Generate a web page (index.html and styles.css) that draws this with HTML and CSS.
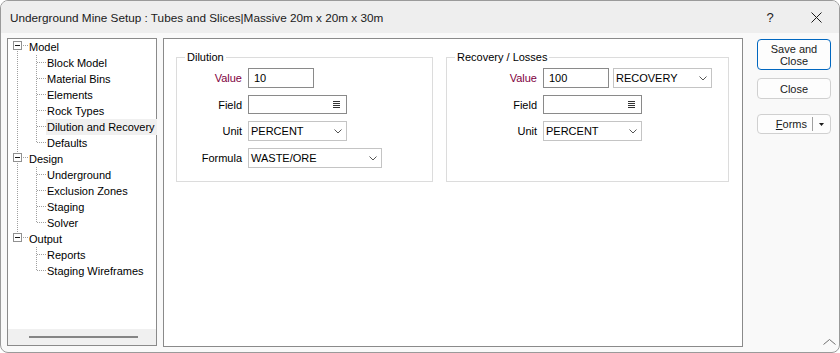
FILE: index.html
```html
<!DOCTYPE html>
<html lang="en">
<head>
  <meta charset="UTF-8" />
  <title>Underground Mine Setup</title>
  <link rel="stylesheet" href="styles.css">
</head>
<body>
  <div class="window">
    <div class="titlebar">
      <span class="title">Underground Mine Setup : Tubes and Slices|Massive 20m x 20m x 30m</span>
      <span class="tb-btn help">?</span>
      <span class="tb-btn">
        <svg width="11" height="11" viewBox="0 0 11 11"><path d="M0.5 0.5L10.5 10.5M10.5 0.5L0.5 10.5" stroke="#1b1b1b" stroke-width="1" fill="none"/></svg>
      </span>
    </div>

    <div class="content">
      <div class="tree-panel">
        <div class="tree">
          <div class="node">
            <svg class="twist" width="20" height="16"><path class="dot" d="M9.5 12V16M15 6.5H20"/><rect x="5.5" y="2.5" width="8" height="8"/><path class="minus" d="M7 6.5H12"/></svg>
            <span class="label">Model</span>
          </div>
          <div class="node">
            <svg width="38" height="16"><path class="dot" d="M9.5 0V16M28.5 0V16M29 7.5H38"/></svg>
            <span class="label">Block Model</span>
          </div>
          <div class="node">
            <svg width="38" height="16"><path class="dot" d="M9.5 0V16M28.5 0V16M29 7.5H38"/></svg>
            <span class="label">Material Bins</span>
          </div>
          <div class="node">
            <svg width="38" height="16"><path class="dot" d="M9.5 0V16M28.5 0V16M29 7.5H38"/></svg>
            <span class="label">Elements</span>
          </div>
          <div class="node">
            <svg width="38" height="16"><path class="dot" d="M9.5 0V16M28.5 0V16M29 7.5H38"/></svg>
            <span class="label">Rock Types</span>
          </div>
          <div class="node selected">
            <svg width="38" height="16"><path class="dot" d="M9.5 0V16M28.5 0V16M29 7.5H38"/></svg>
            <span class="label">Dilution and Recovery</span>
          </div>
          <div class="node">
            <svg width="38" height="16"><path class="dot" d="M9.5 0V16M28.5 0V8M29 7.5H38"/></svg>
            <span class="label">Defaults</span>
          </div>

          <div class="node">
            <svg class="twist" width="20" height="16"><path class="dot" d="M9.5 0V2M9.5 12V16M15 6.5H20"/><rect x="5.5" y="2.5" width="8" height="8"/><path class="minus" d="M7 6.5H12"/></svg>
            <span class="label">Design</span>
          </div>
          <div class="node">
            <svg width="38" height="16"><path class="dot" d="M9.5 0V16M28.5 0V16M29 7.5H38"/></svg>
            <span class="label">Underground</span>
          </div>
          <div class="node">
            <svg width="38" height="16"><path class="dot" d="M9.5 0V16M28.5 0V16M29 7.5H38"/></svg>
            <span class="label">Exclusion Zones</span>
          </div>
          <div class="node">
            <svg width="38" height="16"><path class="dot" d="M9.5 0V16M28.5 0V16M29 7.5H38"/></svg>
            <span class="label">Staging</span>
          </div>
          <div class="node">
            <svg width="38" height="16"><path class="dot" d="M9.5 0V16M28.5 0V8M29 7.5H38"/></svg>
            <span class="label">Solver</span>
          </div>

          <div class="node">
            <svg class="twist" width="20" height="16"><path class="dot" d="M9.5 0V2M15 6.5H20"/><rect x="5.5" y="2.5" width="8" height="8"/><path class="minus" d="M7 6.5H12"/></svg>
            <span class="label">Output</span>
          </div>
          <div class="node">
            <svg width="38" height="16"><path class="dot" d="M28.5 0V16M29 7.5H38"/></svg>
            <span class="label">Reports</span>
          </div>
          <div class="node">
            <svg width="38" height="16"><path class="dot" d="M28.5 0V8M29 7.5H38"/></svg>
            <span class="label">Staging Wireframes</span>
          </div>
        </div>
        <div class="hscroll"><div class="thumb"></div></div>
      </div>

      <div class="main-panel">
        <fieldset class="group dilution">
          <legend>Dilution</legend>
          <div class="form">
            <label class="req">Value</label>
            <input class="txt" type="text" value="10">

            <label>Field</label>
            <div class="field">
              <svg width="7" height="7"><path d="M0 0.5H7M0 2.5H7M0 4.5H7M0 6.5H7" stroke="#333"/></svg>
            </div>

            <label>Unit</label>
            <div class="combo">
              <span>PERCENT</span>
              <svg class="chev" width="8" height="5"><path d="M0.5 0.5L4 4L7.5 0.5"/></svg>
            </div>

            <label>Formula</label>
            <div class="combo wide">
              <span>WASTE/ORE</span>
              <svg class="chev" width="8" height="5"><path d="M0.5 0.5L4 4L7.5 0.5"/></svg>
            </div>
          </div>
        </fieldset>

        <fieldset class="group recovery">
          <legend>Recovery / Losses</legend>
          <div class="form">
            <label class="req">Value</label>
            <div class="pair">
              <input class="txt" type="text" value="100">
              <div class="combo">
                <span>RECOVERY</span>
                <svg class="chev" width="8" height="5"><path d="M0.5 0.5L4 4L7.5 0.5"/></svg>
              </div>
            </div>

            <label>Field</label>
            <div class="field">
              <svg width="7" height="7"><path d="M0 0.5H7M0 2.5H7M0 4.5H7M0 6.5H7" stroke="#333"/></svg>
            </div>

            <label>Unit</label>
            <div class="combo">
              <span>PERCENT</span>
              <svg class="chev" width="8" height="5"><path d="M0.5 0.5L4 4L7.5 0.5"/></svg>
            </div>
          </div>
        </fieldset>
      </div>

      <div class="side">
        <button class="btn btn-save">Save and<br>Close</button>
        <button class="btn btn-close">Close</button>
        <button class="btn btn-forms">
          <span class="forms-main"><u>F</u>orms</span>
          <span class="split"></span>
          <span class="drop"><svg width="5" height="3"><path d="M0 0H5L2.5 3Z" fill="#1a1a1a"/></svg></span>
        </button>
        <svg class="grip" width="13" height="6"><path d="M0.5 5.5L6.5 0.5L12.5 5.5" stroke="#707070" fill="none"/></svg>
      </div>
    </div>
  </div>
</body>
</html>
```

FILE: styles.css
```css
* {
  box-sizing: border-box;
}

body {
  margin: 0;
  font-family: "Liberation Sans", Arial, sans-serif;
  font-size: 11px;
  color: #000;
  background: #ffffff;
}

.window {
  width: 840px;
  height: 353px;
  border: 1px solid #9a9a9a;
  border-radius: 8px;
  overflow: hidden;
  display: flex;
  flex-direction: column;
  background: #f9f9f9;
}

.titlebar {
  height: 32px;
  flex: none;
  display: flex;
  align-items: center;
  background: #eeeeee;
}

.title {
  flex: 1;
  padding-left: 9px;
  font-size: 11.75px;
  color: #1a1a1a;
}

.tb-btn {
  width: 46px;
  height: 32px;
  display: flex;
  align-items: center;
  justify-content: center;
  color: #1b1b1b;
}

.help {
  font-size: 13px;
}

.content {
  flex: 1;
  display: flex;
  align-items: flex-start;
  padding: 5px 0 0 6px;
}

/* tree */
.tree-panel {
  width: 150px;
  height: 308px;
  border: 1px solid #8a8a8a;
  background: #fff;
  display: flex;
  flex-direction: column;
}

.tree {
  flex: 1;
}

.node {
  display: flex;
  height: 16px;
  align-items: center;
}

.node svg {
  flex: none;
  display: block;
  shape-rendering: crispEdges;
}

.node .label {
  padding: 0 2px 0 1px;
  line-height: 16px;
  white-space: nowrap;
}

.node.selected .label {
  background: #f0f0f0;
}

.dot {
  stroke: #a0a0a0;
  stroke-dasharray: 1 1;
  fill: none;
}

.twist rect {
  fill: #fff;
  stroke: #919191;
}

.minus {
  stroke: #1a1a1a;
}

.hscroll {
  height: 16px;
  flex: none;
  background: #f0f0f0;
  display: flex;
  align-items: center;
  padding-left: 21px;
}

.thumb {
  width: 109px;
  height: 2px;
  background: #858585;
}

/* main area */
.main-panel {
  width: 580px;
  height: 309px;
  margin-left: 6px;
  border: 1px solid #8a8a8a;
  background: #fff;
  display: flex;
  align-items: flex-start;
  gap: 13px;
  padding: 11px 13px 0 12px;
}

.group {
  margin: 0;
  padding: 4px 0 0 0;
  border: 1px solid #dcdcdc;
  height: 132px;
  min-width: 0;
}

.group legend {
  margin-left: 8px;
  padding: 0 2px;
  line-height: 14px;
  font-size: 11px;
}

.dilution {
  width: 257px;
}

.recovery {
  width: 283px;
}

.form {
  display: grid;
  grid-template-columns: 65px auto;
  column-gap: 6px;
  row-gap: 7px;
  align-items: center;
  justify-items: start;
}

.recovery .form {
  grid-template-columns: 90px auto;
}

.form label {
  justify-self: end;
}

.form .req {
  color: #800040;
}

.txt {
  width: 66px;
  height: 20px;
  border: 1px solid #8a8a8a;
  padding: 0 5px;
  margin: 0;
  font: inherit;
  color: #000;
  background: #fff;
  outline: none;
}

.field {
  width: 99px;
  height: 19px;
  border: 1px solid #8a8a8a;
  display: flex;
  align-items: center;
  justify-content: flex-end;
  padding-right: 6px;
}

.field svg {
  display: block;
  shape-rendering: crispEdges;
}

.combo {
  width: 99px;
  height: 20px;
  border: 1px solid #c4c4c4;
  background: #fff;
  display: flex;
  align-items: center;
  padding: 0 4px 0 2px;
}

.combo span {
  flex: 1;
}

.combo.wide {
  width: 134px;
}

.chev {
  display: block;
}

.chev path {
  stroke: #555;
  fill: none;
}

.pair {
  display: flex;
  gap: 4px;
}

/* buttons */
.side {
  width: 82px;
  margin-left: 14px;
  align-self: stretch;
  display: flex;
  flex-direction: column;
  align-items: flex-start;
}

.btn {
  width: 74px;
  margin: 0;
  padding: 0;
  border: 1px solid #d0d0d0;
  border-radius: 4px;
  background: #fdfdfd;
  font-family: "Liberation Sans", Arial, sans-serif;
  font-size: 11px;
  color: #1a1a1a;
  display: flex;
  align-items: center;
  justify-content: center;
}

.btn-save {
  height: 31px;
  margin-top: 1px;
  border-color: #0067c0;
  line-height: 12px;
  text-align: center;
}

.btn-close {
  height: 21px;
  margin-top: 8px;
}

.btn-forms {
  height: 20px;
  margin-top: 15px;
  justify-content: flex-start;
}

.forms-main {
  flex: 1;
  text-align: right;
  padding-right: 5px;
}

.split {
  width: 1px;
  height: 14px;
  background: #a0a0a0;
}

.drop {
  width: 17px;
  display: flex;
  justify-content: center;
}

.drop svg {
  display: block;
}

.grip {
  margin-top: auto;
  margin-bottom: 7px;
  align-self: flex-end;
  margin-right: 3px;
}
```
